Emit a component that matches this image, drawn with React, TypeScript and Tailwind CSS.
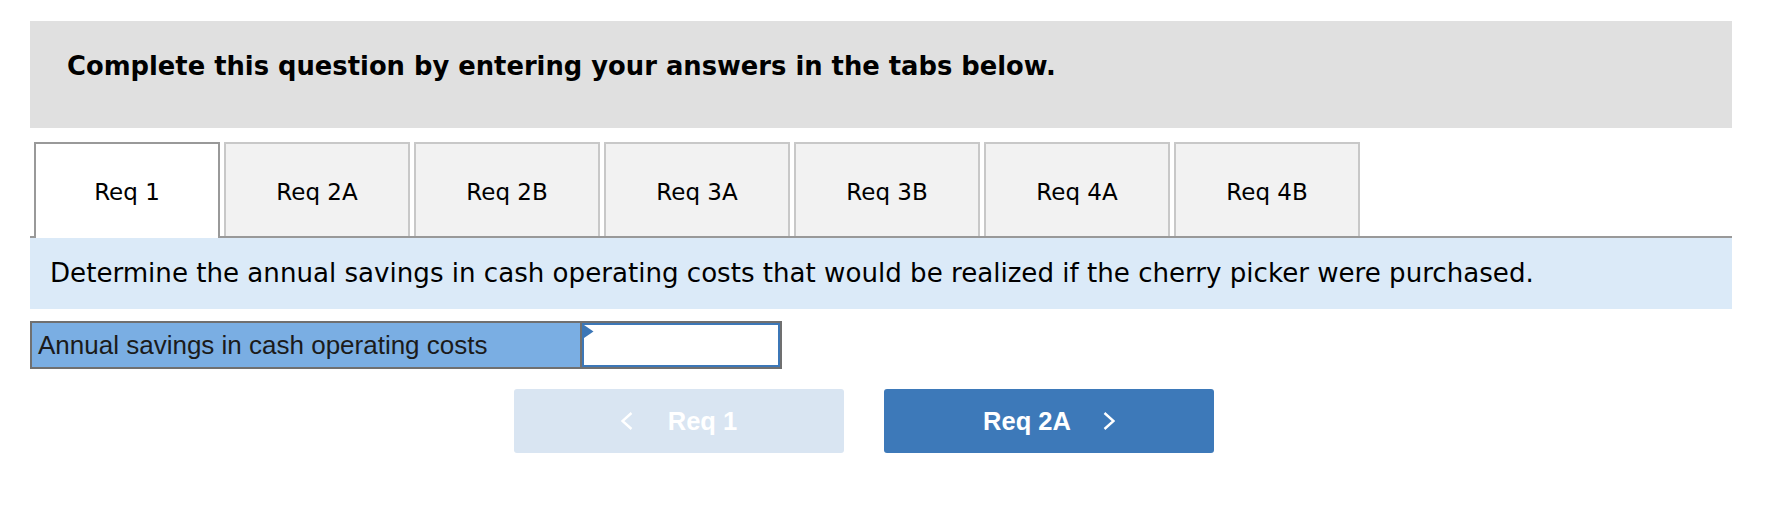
const tabs = ["Req 1", "Req 2A", "Req 2B", "Req 3A", "Req 3B", "Req 4A", "Req 4B"];

function Chevron({ dir }: { dir: "left" | "right" }) {
  return (
    <svg width="12" height="18" viewBox="0 0 12 18" fill="none">
      <polyline
        points={dir === "left" ? "10.5,1 1.5,9 10.5,17" : "1.5,1 10.5,9 1.5,17"}
        stroke="white"
        strokeWidth="2.4"
        strokeLinejoin="miter"
      />
    </svg>
  );
}

export default function App() {
  return (
    <div className="w-[1772px] h-[516px] bg-white pt-[21px] pl-[30px] pr-[40px] font-['DejaVu_Sans',sans-serif] text-black">
      <div className="h-[107px] bg-[#e0e0e0] pl-[37px] pt-[30px]">
        <p className="text-[25.8px] leading-[30px] font-bold">
          Complete this question by entering your answers in the tabs below.
        </p>
      </div>

      <div className="mt-[14px] flex items-end gap-1 pl-1 border-b-2 border-[#999]">
        {tabs.map((tab, i) =>
          i === 0 ? (
            <div
              key={tab}
              className="-mb-[2px] flex h-[96px] w-[186px] items-center justify-center border-2 border-b-0 border-[#999] bg-white pt-[2px] text-[23px]"
            >
              {tab}
            </div>
          ) : (
            <div
              key={tab}
              className="flex h-[94px] w-[186px] items-center justify-center border-2 border-b-0 border-[#c8c8c8] bg-[#f2f2f2] pt-[4px] text-[23px]"
            >
              {tab}
            </div>
          )
        )}
      </div>

      <div className="flex h-[71px] items-center bg-[#dbeaf8] pl-[20px] text-[26.1px]">
        Determine the annual savings in cash operating costs that would be realized if the cherry picker were purchased.
      </div>

      <div className="mt-[12px] flex h-[48px] w-[752px] border-2 border-[#707070]">
        <div className="flex w-[548px] items-center bg-[#7aaee3] pl-[6px] font-['Liberation_Sans',Arial,sans-serif] text-[26px] text-[#1b1b1b]">
          Annual savings in cash operating costs
        </div>
        <div className="flex-1 border-l-2 border-[#707070]">
          <div className="relative h-full w-full border-2 border-[#3c77b7] bg-white">
            <svg className="absolute left-0 top-0" width="10" height="14" viewBox="0 0 10 14">
              <polygon points="0,0 9.5,6.5 0,13" fill="#3c77b7" />
            </svg>
          </div>
        </div>
      </div>

      <div className="mt-[20px] flex gap-[40px] pl-[484px] font-['Liberation_Sans',Arial,sans-serif] text-[25.5px] font-bold text-white">
        <button className="flex h-[64px] w-[330px] items-center justify-center gap-[35px] rounded-[3px] bg-[#d9e5f2]">
          <Chevron dir="left" />
          <span>Req 1</span>
        </button>
        <button className="flex h-[64px] w-[330px] items-center justify-center gap-[32px] rounded-[3px] bg-[#3d79b9]">
          <span>Req 2A</span>
          <Chevron dir="right" />
        </button>
      </div>
    </div>
  );
}
